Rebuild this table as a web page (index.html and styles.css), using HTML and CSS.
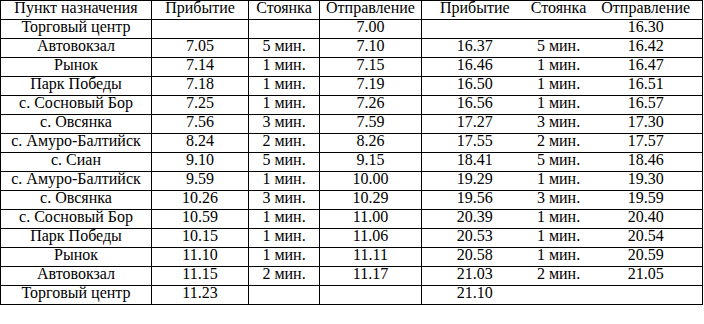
FILE: index.html
```html
<!DOCTYPE html>
<html lang="ru">
<head>
<meta charset="utf-8">
<title>Расписание</title>
<link rel="stylesheet" href="styles.css">
</head>
<body>
<table class="schedule">
  <colgroup>
    <col class="c1"><col class="c2"><col class="c3"><col class="c4"><col class="c5"><col class="c6"><col class="c7">
  </colgroup>
  <tr><td class="v">Пункт назначения</td><td class="v">Прибытие</td><td class="v">Стоянка</td><td class="v">Отправление</td><td>Прибытие</td><td>Стоянка</td><td>Отправление</td></tr>
  <tr><td class="v">Торговый центр</td><td class="v"></td><td class="v"></td><td class="v">7.00</td><td></td><td></td><td>16.30</td></tr>
  <tr><td class="v">Автовокзал</td><td class="v">7.05</td><td class="v">5 мин.</td><td class="v">7.10</td><td>16.37</td><td>5 мин.</td><td>16.42</td></tr>
  <tr><td class="v">Рынок</td><td class="v">7.14</td><td class="v">1 мин.</td><td class="v">7.15</td><td>16.46</td><td>1 мин.</td><td>16.47</td></tr>
  <tr><td class="v">Парк Победы</td><td class="v">7.18</td><td class="v">1 мин.</td><td class="v">7.19</td><td>16.50</td><td>1 мин.</td><td>16.51</td></tr>
  <tr><td class="v">с. Сосновый Бор</td><td class="v">7.25</td><td class="v">1 мин.</td><td class="v">7.26</td><td>16.56</td><td>1 мин.</td><td>16.57</td></tr>
  <tr><td class="v">с. Овсянка</td><td class="v">7.56</td><td class="v">3 мин.</td><td class="v">7.59</td><td>17.27</td><td>3 мин.</td><td>17.30</td></tr>
  <tr><td class="v">с. Амуро-Балтийск</td><td class="v">8.24</td><td class="v">2 мин.</td><td class="v">8.26</td><td>17.55</td><td>2 мин.</td><td>17.57</td></tr>
  <tr><td class="v">с. Сиан</td><td class="v">9.10</td><td class="v">5 мин.</td><td class="v">9.15</td><td>18.41</td><td>5 мин.</td><td>18.46</td></tr>
  <tr><td class="v">с. Амуро-Балтийск</td><td class="v">9.59</td><td class="v">1 мин.</td><td class="v">10.00</td><td>19.29</td><td>1 мин.</td><td>19.30</td></tr>
  <tr><td class="v">с. Овсянка</td><td class="v">10.26</td><td class="v">3 мин.</td><td class="v">10.29</td><td>19.56</td><td>3 мин.</td><td>19.59</td></tr>
  <tr><td class="v">с. Сосновый Бор</td><td class="v">10.59</td><td class="v">1 мин.</td><td class="v">11.00</td><td>20.39</td><td>1 мин.</td><td>20.40</td></tr>
  <tr><td class="v">Парк Победы</td><td class="v">10.15</td><td class="v">1 мин.</td><td class="v">11.06</td><td>20.53</td><td>1 мин.</td><td>20.54</td></tr>
  <tr><td class="v">Рынок</td><td class="v">11.10</td><td class="v">1 мин.</td><td class="v">11.11</td><td>20.58</td><td>1 мин.</td><td>20.59</td></tr>
  <tr><td class="v">Автовокзал</td><td class="v">11.15</td><td class="v">2 мин.</td><td class="v">11.17</td><td>21.03</td><td>2 мин.</td><td>21.05</td></tr>
  <tr><td class="v">Торговый центр</td><td class="v">11.23</td><td class="v"></td><td class="v"></td><td>21.10</td><td></td><td></td></tr>
</table>
</body>
</html>
```
FILE: styles.css
```css
html, body {
  margin: 0;
  padding: 0;
  background: #fff;
}
.schedule {
  border-collapse: collapse;
  table-layout: fixed;
  width: 703px;
  font-family: "Liberation Serif", "Times New Roman", serif;
  font-size: 16px;
  color: #000;
  border: 1px solid #000;
}
.c1 { width: 151px; }
.c2 { width: 97px; }
.c3 { width: 71px; }
.c4 { width: 102px; }
.c5 { width: 106px; }
.c6 { width: 62px; }
.c7 { width: 113px; }
.schedule td {
  height: 18px;
  padding: 0;
  line-height: 14px;
  vertical-align: top;
  text-align: center;
  white-space: nowrap;
  border-top: 1px solid #000;
  border-bottom: 1px solid #000;
}
.schedule td.v {
  border-left: 1px solid #000;
  border-right: 1px solid #000;
}
```
